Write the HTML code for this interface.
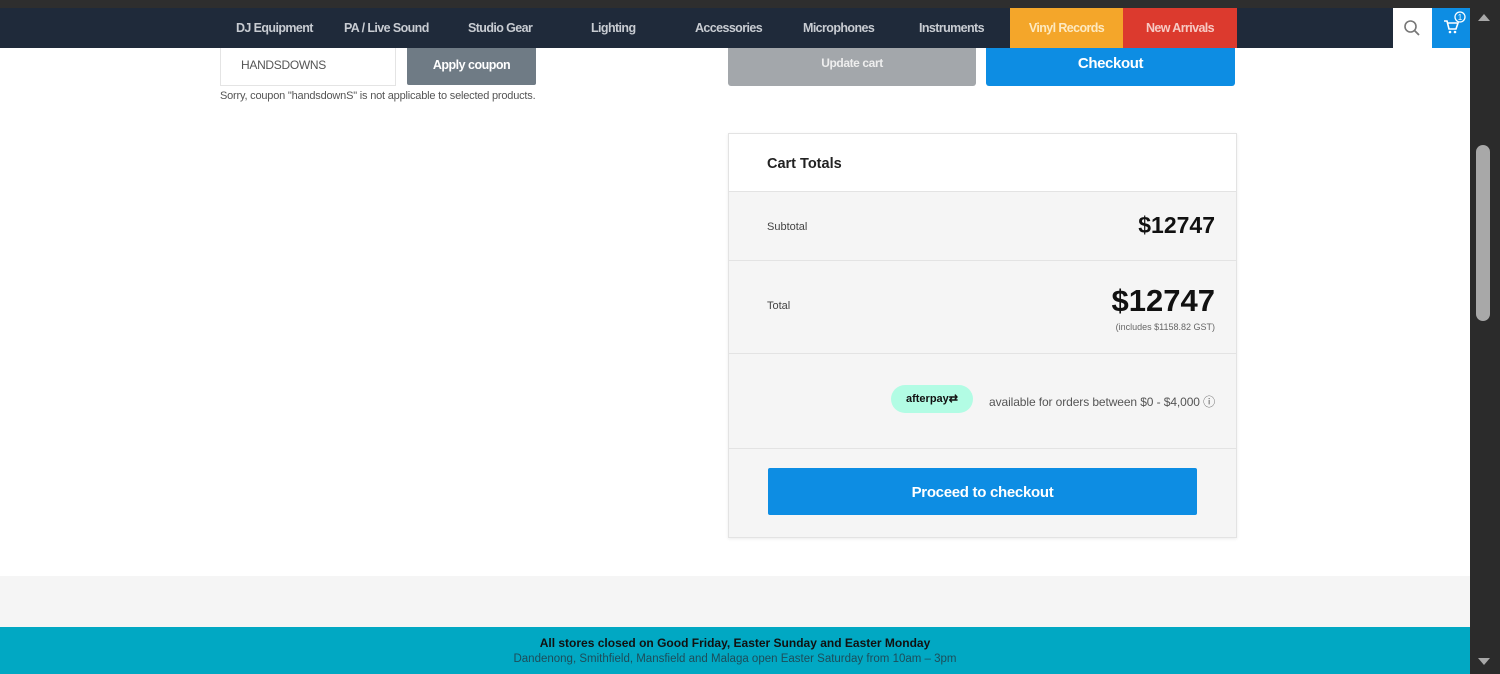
<!DOCTYPE html>
<html><head><style>
*{margin:0;padding:0;box-sizing:border-box}
body{width:1500px;height:674px;overflow:hidden;background:#fff;font-family:"Liberation Sans",sans-serif;position:relative}
.a{position:absolute}
.top{left:0;top:0;width:1500px;height:8px;background:#2e2e2e}
.nav{left:0;top:8px;width:1470px;height:40px;background:#1f2a3a}
.nav span{position:absolute;top:13px;font-size:12.5px;font-weight:bold;color:#c8ccd2;letter-spacing:-0.6px;white-space:nowrap}
.sb{left:1470px;top:0;width:30px;height:674px;background:#2b2b2b}
.thumb{left:1476px;top:145px;width:14px;height:176px;background:#a8a8a8;border-radius:7px}
</style></head><body>
<div class="a top"></div>
<div class="a nav">
<span style="left:236px">DJ Equipment</span>
<span style="left:344px">PA / Live Sound</span>
<span style="left:468px">Studio Gear</span>
<span style="left:591px">Lighting</span>
<span style="left:695px">Accessories</span>
<span style="left:803px">Microphones</span>
<span style="left:919px">Instruments</span>
</div>
<div class="a" style="left:1010px;top:8px;width:113px;height:40px;background:#f4a62a;color:#fde9c0;font-weight:bold;font-size:12.5px;letter-spacing:-0.6px;text-align:center;line-height:40px">Vinyl Records</div>
<div class="a" style="left:1123px;top:8px;width:114px;height:40px;background:#dc3a2e;color:#f6c9c3;font-weight:bold;font-size:12.5px;letter-spacing:-0.6px;text-align:center;line-height:40px">New Arrivals</div>
<div class="a" style="left:1393px;top:8px;width:39px;height:40px;background:#fff"></div>
<svg class="a" style="left:1403px;top:19px" width="18" height="18" viewBox="0 0 18 18"><circle cx="7.5" cy="7.5" r="5.5" fill="none" stroke="#777" stroke-width="1.6"/><line x1="11.5" y1="11.5" x2="16" y2="16" stroke="#777" stroke-width="1.8"/></svg>
<div class="a" style="left:1432px;top:8px;width:38px;height:40px;background:#0d8de3"></div>
<svg class="a" style="left:1442px;top:10px" width="28" height="26" viewBox="0 0 28 26"><path d="M2 11h3l2 8h7l2-6H6" fill="none" stroke="#fff" stroke-width="1.6"/><circle cx="8" cy="22" r="1.3" fill="#fff"/><circle cx="13" cy="22" r="1.3" fill="#fff"/><circle cx="18" cy="7" r="5" fill="#0d8de3" stroke="#fff" stroke-width="1.3"/><text x="18" y="10" font-size="8" fill="#fff" text-anchor="middle" font-family="Liberation Sans">1</text></svg>
<div class="a sb"></div><div class="a thumb"></div>
<div class="a" style="left:1478px;top:14px;width:0;height:0;border-left:6px solid transparent;border-right:6px solid transparent;border-bottom:7px solid #a8a8a8"></div>
<div class="a" style="left:1478px;top:658px;width:0;height:0;border-left:6px solid transparent;border-right:6px solid transparent;border-top:7px solid #a8a8a8"></div>

<div class="a" style="left:220px;top:48px;width:176px;height:38px;border:1px solid #e4e4e4;border-top:none;font-size:12px;color:#555;padding:10px 0 0 20px;letter-spacing:-0.3px">HANDSDOWNS</div>
<div class="a" style="left:407px;top:48px;width:129px;height:37px;background:#6f7b85;border-radius:0 0 2px 2px;color:#fff;font-weight:bold;font-size:12.5px;text-align:center;line-height:34px;letter-spacing:-0.5px">Apply coupon</div>
<div class="a" style="left:220px;top:90px;font-size:11px;color:#555;letter-spacing:-0.2px">Sorry, coupon "handsdownS" is not applicable to selected products.</div>
<div class="a" style="left:728px;top:48px;width:248px;height:38px;background:#a3a7ab;border-radius:0 0 3px 3px;color:#eee;font-weight:bold;font-size:12px;text-align:center;line-height:30px;letter-spacing:-0.4px">Update cart</div>
<div class="a" style="left:986px;top:48px;width:249px;height:38px;background:#0d8de3;border-radius:0 0 3px 3px;color:#fff;font-weight:bold;font-size:15px;text-align:center;line-height:31px;letter-spacing:-0.4px">Checkout</div>

<div class="a" style="left:728px;top:133px;width:509px;height:405px;border:1px solid #e3e3e3;background:#f5f5f5;box-shadow:0 1px 3px rgba(0,0,0,.08)">
 <div class="a" style="left:0;top:0;width:507px;height:58px;background:#fff;border-bottom:1px solid #e3e3e3;font-weight:bold;font-size:14.5px;color:#222;padding:22px 0 0 38px">Cart Totals</div>
 <div class="a" style="left:0;top:126px;width:507px;border-top:1px solid #e3e3e3"></div>
 <div class="a" style="left:0;top:219px;width:507px;border-top:1px solid #e3e3e3"></div>
 <div class="a" style="left:0;top:314px;width:507px;border-top:1px solid #e3e3e3"></div>
 <div class="a" style="left:38px;top:87px;font-size:11px;color:#444">Subtotal</div>
 <div class="a" style="right:21px;top:78px;font-size:23px;font-weight:bold;color:#111">$12747</div>
 <div class="a" style="left:38px;top:166px;font-size:11px;color:#444">Total</div>
 <div class="a" style="right:21px;top:149px;font-size:31px;font-weight:bold;color:#111">$12747</div>
 <div class="a" style="right:21px;top:188px;font-size:9px;color:#666">(includes $1158.82 GST)</div>
 <div class="a" style="left:162px;top:251px;width:82px;height:28px;background:#b2fce4;border-radius:14px;font-size:11px;font-weight:bold;color:#111;text-align:center;line-height:28px">afterpay⇄</div>
 <div class="a" style="right:21px;top:259px;font-size:12px;color:#555;white-space:nowrap;letter-spacing:-0.1px">available for orders between $0 - $4,000 ⓘ</div>
 <div class="a" style="left:39px;top:334px;width:429px;height:47px;background:#0d8de3;border-radius:2px;color:#fff;font-weight:bold;font-size:15px;text-align:center;line-height:49px;letter-spacing:-0.3px">Proceed to checkout</div>
</div>

<div class="a" style="left:0;top:576px;width:1470px;height:51px;background:#f5f5f5"></div>
<div class="a" style="left:0;top:627px;width:1470px;height:47px;background:#01a8c3;text-align:center">
 <div style="font-size:12px;font-weight:bold;color:#111;margin-top:9px">All stores closed on Good Friday, Easter Sunday and Easter Monday</div>
 <div style="font-size:11.5px;color:#1d4d5a;margin-top:3px">Dandenong, Smithfield, Mansfield and Malaga open Easter Saturday from 10am – 3pm</div>
</div>
</body></html>
